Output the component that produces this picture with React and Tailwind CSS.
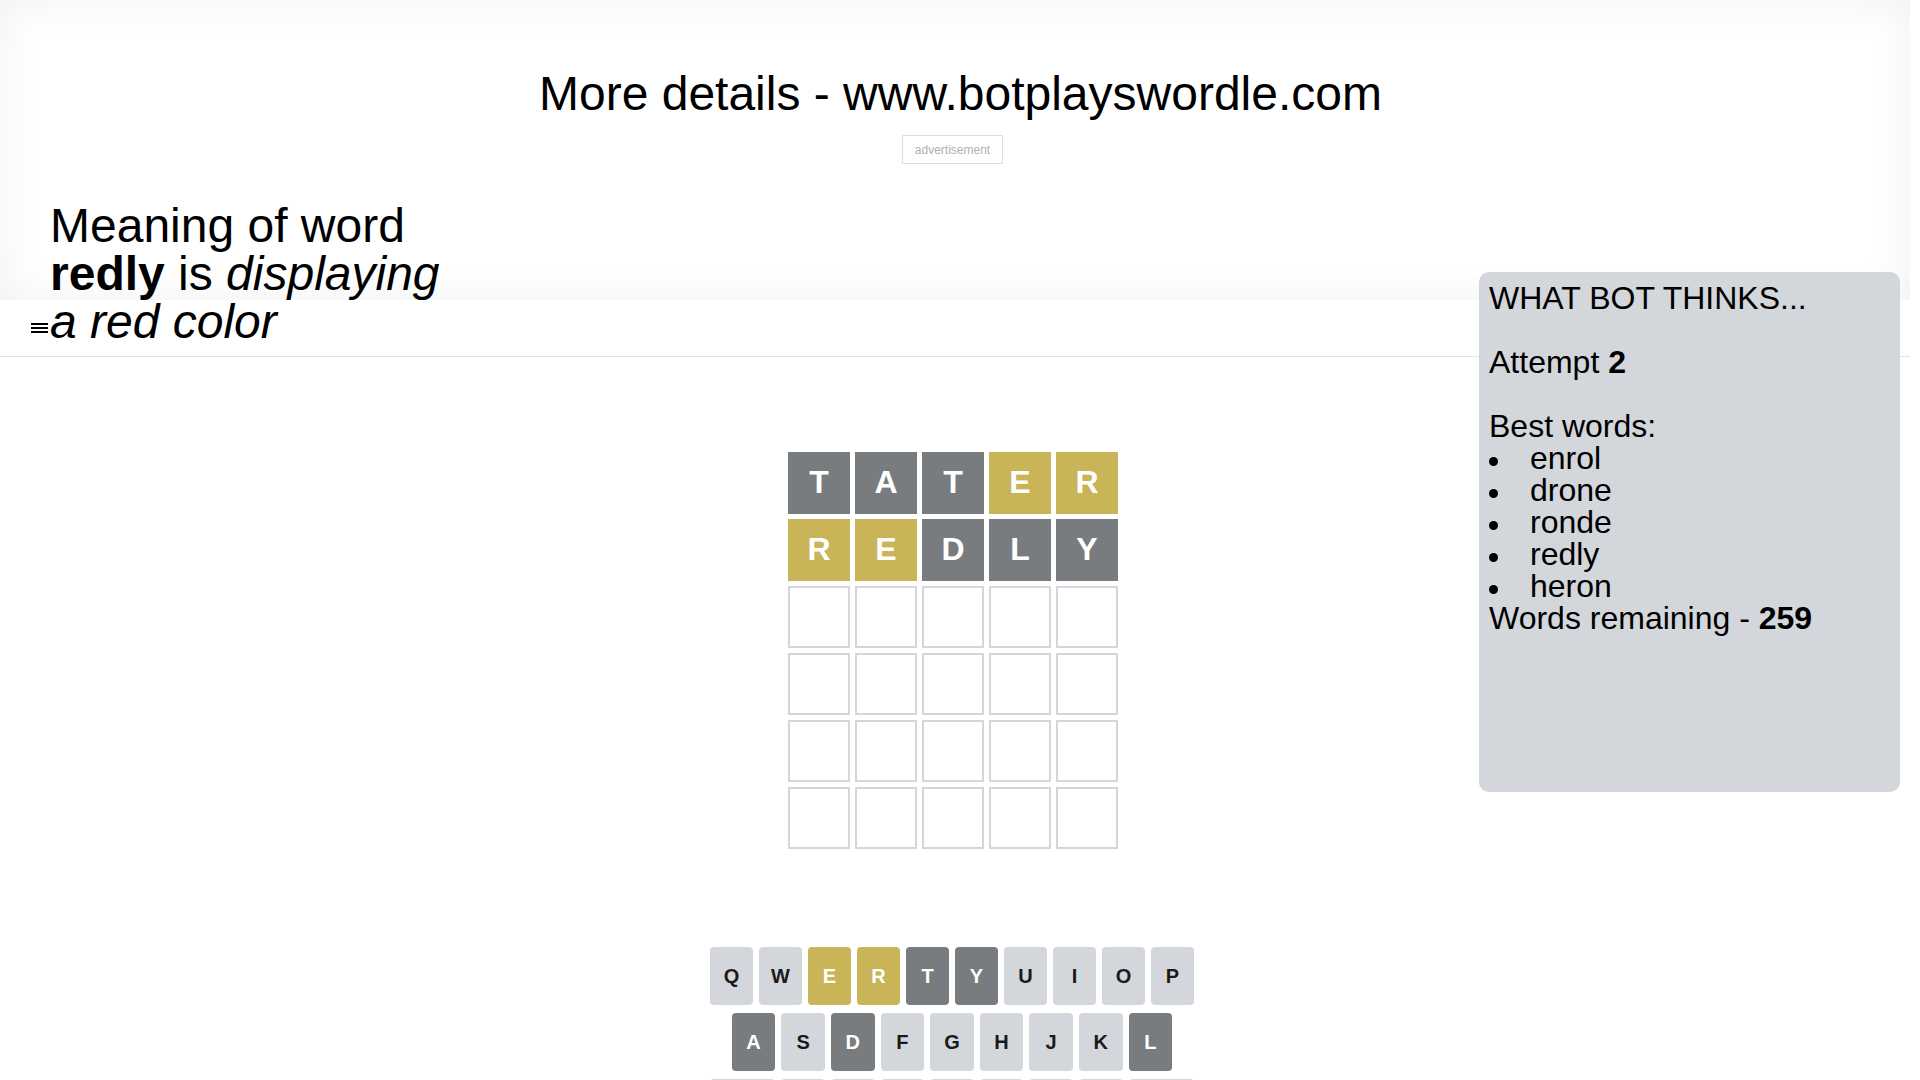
import React from 'react'

const board = [
  [['T', 'gray'], ['A', 'gray'], ['T', 'gray'], ['E', 'yellow'], ['R', 'yellow']],
  [['R', 'yellow'], ['E', 'yellow'], ['D', 'gray'], ['L', 'gray'], ['Y', 'gray']],
  [], [], [], [],
]

const tileColor = { gray: 'bg-[#787c7e]', yellow: 'bg-[#c9b458]' }

const keyState = { E: 'yellow', R: 'yellow', T: 'gray', Y: 'gray', A: 'gray', D: 'gray', L: 'gray' }

const keyColor = {
  gray: 'bg-[#787c7e] text-white',
  yellow: 'bg-[#c9b458] text-white',
  none: 'bg-[#d3d6da] text-[#1a1a1b]',
}

const bestWords = ['enrol', 'drone', 'ronde', 'redly', 'heron']

function Tile({ cell }) {
  if (!cell) return <div className="h-[62px] w-[62px] border-2 border-[#d3d6da]" />
  const [letter, state] = cell
  return (
    <div className={`flex h-[62px] w-[62px] items-center justify-center pb-[3px] text-[32px] font-bold leading-none text-white ${tileColor[state]}`}>
      {letter}
    </div>
  )
}

function Key({ label, wide }) {
  const color = keyColor[keyState[label] || 'none']
  return (
    <div className={`mr-[6px] flex h-[58px] items-center justify-center rounded-[4px] font-bold ${wide ? 'flex-[1.5] text-[12px]' : 'flex-1 text-[20px]'} ${color}`}>
      {label}
    </div>
  )
}

export default function App() {
  return (
    <div className="relative w-[1910px] bg-white font-['Liberation_Sans',Arial,sans-serif] text-black">
      <header className="flex h-[300px] flex-col items-center shadow-[inset_0_0_45px_rgba(0,0,0,0.06)]">
        <h1 className="mt-[70px] shrink-0 pl-[11px] text-[48px] leading-none">More details - www.botplayswordle.com</h1>
        <div className="mt-[17px] mr-[5px] flex h-[29px] w-[101px] shrink-0 items-center justify-center border border-[#dedede] text-[12px] text-[#b0b0b0]">
          advertisement
        </div>
        <h2 className="mt-[38px] ml-[50px] w-[400px] shrink-0 self-start text-[48px] leading-[48px]">
          Meaning of word <b>redly</b> is <i>displaying a red color</i>
        </h2>
      </header>

      <nav className="flex h-[57px] items-center border-b border-[#e3e3e3] pl-[31px]">
        <div className="flex flex-col gap-[2px]">
          <span className="h-[2px] w-[17px] bg-black" />
          <span className="h-[2px] w-[17px] bg-black" />
          <span className="h-[2px] w-[17px] bg-black" />
        </div>
      </nav>

      <main className="flex flex-col items-center pt-[95px] pb-[228px]">
        <div className="mr-[4px] grid grid-cols-5 gap-[5px]">
          {board.map((row, r) =>
            [0, 1, 2, 3, 4].map((c) => <Tile key={`${r}-${c}`} cell={row[c]} />)
          )}
        </div>

        <div className="mt-[98px] w-[490px]">
          <div className="mb-[8px] flex">
            {'QWERTYUIOP'.split('').map((k) => <Key key={k} label={k} />)}
          </div>
          <div className="mb-[8px] flex">
            <div className="flex-[0.5]" />
            {'ASDFGHJKL'.split('').map((k) => <Key key={k} label={k} />)}
            <div className="flex-[0.5]" />
          </div>
          <div className="flex">
            <Key label="ENTER" wide />
            {'ZXCVBNM'.split('').map((k) => <Key key={k} label={k} />)}
            <Key label="⌫" wide />
          </div>
        </div>
      </main>

      <aside className="absolute right-[10px] top-[272px] h-[520px] w-[421px] rounded-[10px] bg-[#d3d6da] p-[10px] text-[32px] leading-[32px]">
        <div>WHAT BOT THINKS...</div>
        <div className="h-[32px]" />
        <div>Attempt <b>2</b></div>
        <div className="h-[32px]" />
        <div>Best words:</div>
        {bestWords.map((w) => (
          <div key={w} className="flex items-start">
            <span className="mt-[15px] mr-[32px] h-[9px] w-[9px] rounded-full bg-black" />
            {w}
          </div>
        ))}
        <div>Words remaining - <b>259</b></div>
      </aside>
    </div>
  )
}
